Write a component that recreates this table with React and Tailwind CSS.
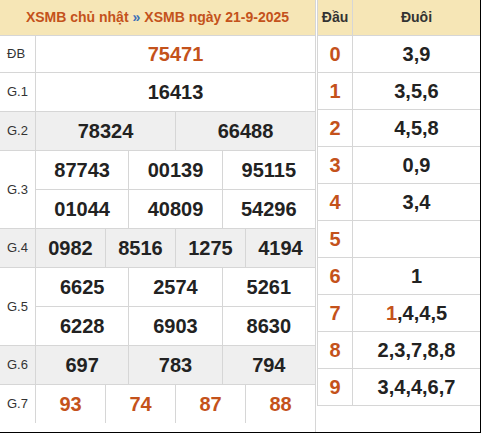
import React from "react";

const ORANGE = "text-[#c4521b]";

function Cell({ children, className = "", last = false }) {
  return (
    <div
      className={`flex-1 flex items-center justify-center ${last ? "" : "border-r border-[#d6d6d6]"} ${className}`}
    >
      {children}
    </div>
  );
}

function NumRow({ nums, h, orange = false }) {
  return (
    <div className={`flex ${h} border-b border-[#d6d6d6]`}>
      {nums.map((n, i) => (
        <Cell key={i} last={i === nums.length - 1}>
          <span className={`font-bold text-[20px] ${orange ? ORANGE : "text-[#222]"}`}>{n}</span>
        </Cell>
      ))}
    </div>
  );
}

function Prize({ label, rows, grey = false, orange = false, rowH = "h-[40px]", lastRow = false }) {
  return (
    <div className={`flex ${grey ? "bg-[#efefef]" : "bg-white"}`}>
      <div
        className={`w-[36px] shrink-0 flex items-center pl-[7px] text-[13px] text-[#333] border-r border-[#d6d6d6] ${lastRow ? "" : "border-b"}`}
      >
        {label}
      </div>
      <div className="flex-1 flex flex-col">
        {rows.map((r, i) => (
          <div
            key={i}
            className={`flex ${rowH} ${lastRow && i === rows.length - 1 ? "" : "border-b border-[#d6d6d6]"}`}
          >
            {r.map((n, j) => (
              <Cell key={j} last={j === r.length - 1}>
                <span className={`font-bold text-[20px] ${orange ? ORANGE : "text-[#222]"}`}>{n}</span>
              </Cell>
            ))}
          </div>
        ))}
      </div>
    </div>
  );
}

const loto = [
  ["0", "3,9"],
  ["1", "3,5,6"],
  ["2", "4,5,8"],
  ["3", "0,9"],
  ["4", "3,4"],
  ["5", ""],
  ["6", "1"],
  ["7", "*"],
  ["8", "2,3,7,8,8"],
  ["9", "3,4,4,6,7"],
];

export default function App() {
  return (
    <div
      className="w-[481px] h-[433px] bg-white flex overflow-hidden border-b border-r border-black"
      style={{ fontFamily: '"Liberation Sans", Arial, sans-serif' }}
    >
      {/* Left table */}
      <div className="w-[316px] shrink-0 flex flex-col border-r border-[#d6d6d6]">
        <div className="h-[36px] shrink-0 bg-[#f6e6b6] border-b border-[#d6d6d6] flex items-center justify-center text-[14px] font-bold">
          <span className={ORANGE}>XSMB chủ nhật</span>
          <span className="text-[#3b6fb6] mx-[4px]">»</span>
          <span className={ORANGE}>XSMB ngày 21-9-2025</span>
        </div>
        <Prize label="ĐB" rows={[["75471"]]} orange rowH="h-[37px]" />
        <Prize label="G.1" rows={[["16413"]]} rowH="h-[39px]" />
        <Prize label="G.2" rows={[["78324", "66488"]]} grey rowH="h-[39px]" />
        <Prize label="G.3" rows={[["87743", "00139", "95115"], ["01044", "40809", "54296"]]} rowH="h-[39px]" />
        <Prize label="G.4" rows={[["0982", "8516", "1275", "4194"]]} grey rowH="h-[39px]" />
        <Prize label="G.5" rows={[["6625", "2574", "5261"], ["6228", "6903", "8630"]]} rowH="h-[39px]" />
        <Prize label="G.6" rows={[["697", "783", "794"]]} grey rowH="h-[39px]" />
        <Prize label="G.7" rows={[["93", "74", "87", "88"]]} orange rowH="h-[38px]" lastRow />
      </div>

      {/* Right table */}
      <div className="flex-1 ml-px">
        <div className="border-l border-[#d6d6d6] flex flex-col">
          <div className="flex h-[36px] bg-[#f6e6b6] border-b border-[#d6d6d6] text-[14px] font-bold text-[#333]">
            <div className="w-[35px] shrink-0 flex items-center justify-center border-r border-[#d6d6d6]">Đầu</div>
            <div className="flex-1 flex items-center justify-center">Đuôi</div>
          </div>
          {loto.map(([d, t]) => (
            <div key={d} className="flex h-[37px] border-b border-[#d6d6d6]">
              <div className={`w-[35px] shrink-0 flex items-center justify-center border-r border-[#d6d6d6] font-bold text-[20px] ${ORANGE}`}>
                {d}
              </div>
              <div className="flex-1 flex items-center justify-center font-bold text-[20px] text-[#222]">
                {t === "*" ? (
                  <>
                    <span className={ORANGE}>1</span>,4,4,5
                  </>
                ) : (
                  t
                )}
              </div>
            </div>
          ))}
        </div>
      </div>
    </div>
  );
}
